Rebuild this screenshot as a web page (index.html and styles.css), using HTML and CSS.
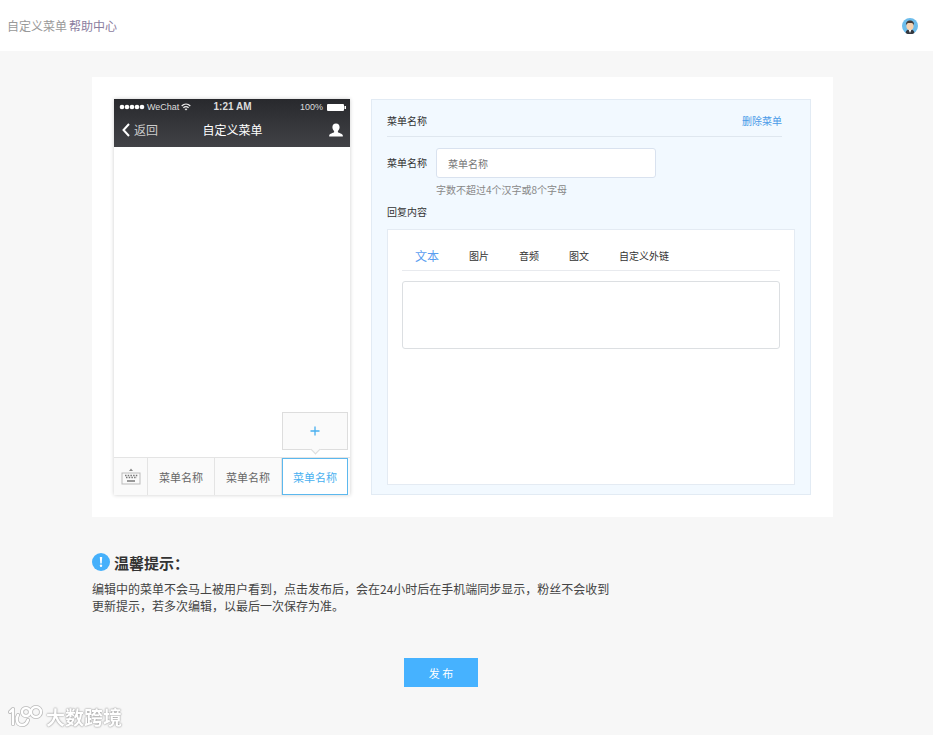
FILE: index.html
```html
<!DOCTYPE html>
<html lang="zh-CN">
<head>
    <meta charset="UTF-8">
    <meta name="viewport" content="width=device-width, initial-scale=1">
    <title>自定义菜单</title>
    <link rel="stylesheet" href="styles.css">
</head>
<body>
    <header class="topbar">
        <nav class="topbar-nav">
            <span>自定义菜单</span>
            <a href="#">帮助中心</a>
        </nav>
        <svg class="avatar" viewBox="0 0 16 16" aria-hidden="true">
            <circle cx="8" cy="8" r="8" fill="#6dbdec"/>
            <path d="M3.600 15c.3-2.600 1.800-3.800 4.400-3.800s4.100 1.200 4.400 3.800A8 8 0 0 1 3.600 15z" fill="#34383f"/>
            <path d="M6.300 11l1.700 4 1.700-4z" fill="#fff"/>
            <ellipse cx="8" cy="8" rx="3.600" ry="4" fill="#f6d2b0"/>
            <path d="M4 7.500C3.600 4 5.500 2.500 8 2.500s4.500 1.500 4 5c-.6-1.800-1.400-2.400-4-2.400S4.600 5.700 4 7.500z" fill="#423a38"/>
        </svg>
    </header>

    <main class="content">
        <div class="editor">
            <section class="phone">
                <div class="phone-head">
                    <div class="status">
                        <div class="status-left">
                            <svg width="26" height="6" viewBox="0 0 26 6" fill="#fff" aria-hidden="true">
                                <circle cx="3" cy="3" r="2.300"/><circle cx="8" cy="3" r="2.300"/><circle cx="13" cy="3" r="2.300"/><circle cx="18" cy="3" r="2.300"/><circle cx="23" cy="3" r="2.300"/>
                            </svg>
                            <span>WeChat</span>
                            <svg width="10" height="8" viewBox="0 0 10 8" fill="none" stroke="#eee" stroke-width="1.300" aria-hidden="true">
                                <path d="M.7 3C3.200.6 6.800.6 9.300 3M2.400 4.800c1.500-1.400 3.700-1.400 5.200 0"/>
                                <path d="M5 7.500L3.500 6q1.500-1 3 0z" fill="#eee" stroke="none"/>
                            </svg>
                        </div>
                        <span class="status-time">1:21 AM</span>
                        <div class="status-right">
                            <span>100%</span>
                            <svg width="19" height="7" viewBox="0 0 19 7" fill="#fff" aria-hidden="true">
                                <rect y="0" width="17" height="7" rx="1"/><rect x="17.500" y="2" width="1.500" height="3"/>
                            </svg>
                        </div>
                    </div>
                    <div class="phone-nav">
                        <a class="back" href="#">
                            <svg width="8" height="14" viewBox="0 0 8 14" fill="none" stroke="#fff" stroke-width="2" aria-hidden="true"><path d="M7 1L1.500 7 7 13"/></svg>
                            返回
                        </a>
                        <span class="phone-title">自定义菜单</span>
                        <svg class="person" width="14" height="14" viewBox="0 0 14 14" fill="#fff" aria-hidden="true">
                            <path d="M7 .5c2.400 0 3.600 1.500 3.600 3.700 0 1.500-.7 2.900-1.700 3.700v1.300c.8.8 4.600 1.200 4.900 3v1.300H.2v-1.300c.3-1.800 4.100-2.200 4.900-3V7.900C4.100 7.100 3.400 5.700 3.400 4.200 3.400 2 4.600.5 7 .5z"/>
                        </svg>
                    </div>
                </div>
                <div class="phone-screen"></div>
                <div class="phone-menu">
                    <button class="menu-key" type="button" aria-label="键盘">
                        <svg width="20" height="17" viewBox="0 0 20 17" fill="none" stroke="#bbb" aria-hidden="true">
                            <path d="M8 3l2-2.500L12 3z" fill="#888" stroke="none"/>
                            <rect x="1" y="5" width="18" height="11" stroke-width="1"/>
                            <path d="M4 7.500h13M5 9.500h11" stroke="#777" stroke-width="1.500" stroke-dasharray="1.500 1.200"/>
                            <path d="M6 13h8" stroke="#777" stroke-width="1.500"/>
                        </svg>
                    </button>
                    <button class="menu-item" type="button">菜单名称</button>
                    <button class="menu-item" type="button">菜单名称</button>
                    <div class="menu-slot">
                        <button class="menu-add" type="button" aria-label="添加子菜单">
                            <svg width="10" height="10" viewBox="0 0 10 10" stroke="#48b0f0" aria-hidden="true"><path d="M5 .5v9M.5 5h9" stroke-width="1.300"/></svg>
                        </button>
                        <button class="menu-item menu-item--active" type="button">菜单名称</button>
                    </div>
                </div>
            </section>

            <form class="panel">
                <div class="panel-head">
                    <span>菜单名称</span>
                    <a href="#">删除菜单</a>
                </div>
                <div class="row">
                    <label for="menu_name">菜单名称</label>
                    <div class="field">
                        <input id="menu_name" type="text" name="menu_name" placeholder="菜单名称">
                        <p class="hint">字数不超过4个汉字或8个字母</p>
                    </div>
                </div>
                <label class="reply-label" for="reply">回复内容</label>
                <div class="reply">
                    <div class="tabs">
                        <button class="tab tab--active" type="button">文本</button>
                        <button class="tab" type="button">图片</button>
                        <button class="tab" type="button">音频</button>
                        <button class="tab" type="button">图文</button>
                        <button class="tab" type="button">自定义外链</button>
                    </div>
                    <textarea id="reply" name="reply"></textarea>
                </div>
            </form>
        </div>

        <section class="tips">
            <h2>
                <svg width="18" height="18" viewBox="0 0 18 18" aria-hidden="true">
                    <circle cx="9" cy="9" r="9" fill="#45b0fb"/>
                    <path d="M7.800 4h2.400l-.5 6.500H8.300z" fill="#fff"/><circle cx="9" cy="12.700" r="1.200" fill="#fff"/>
                </svg>
                温馨提示：
            </h2>
            <p>编辑中的菜单不会马上被用户看到，点击发布后，会在24小时后在手机端同步显示，粉丝不会收到更新提示，若多次编辑，以最后一次保存为准。</p>
        </section>

        <div class="actions">
            <button class="publish" type="button">发 布</button>
        </div>
    </main>

    <div class="watermark">
        <svg width="36" height="24" viewBox="0 0 36 24" fill="none" stroke-linecap="round" stroke-linejoin="round" aria-hidden="true">
            <g stroke="#bbb" stroke-width="4">
                <path d="M2 7l3-3v15M10 10c-2 3-2 10 4 10 3 0 5-2 6-5"/>
                <circle cx="18" cy="7" r="4"/><circle cx="28" cy="7" r="5"/>
            </g>
            <g stroke="#fff" stroke-width="2.400">
                <path d="M2 7l3-3v15M10 10c-2 3-2 10 4 10 3 0 5-2 6-5"/>
                <circle cx="18" cy="7" r="4"/><circle cx="28" cy="7" r="5"/>
            </g>
        </svg>
        <span>大数跨境</span>
    </div>
</body>
</html>
```
FILE: styles.css
```css
* {
    box-sizing: border-box;
}

body {
    margin: 0;
    background: #f7f7f7;
    color: #333;
    font-family: "Noto Sans CJK SC", sans-serif;
    font-size: 10px;
    line-height: 16px;
}

button,
input,
textarea {
    font: inherit;
    color: inherit;
}

button {
    padding: 0;
    border: none;
    background: none;
}

a {
    text-decoration: none;
}

svg {
    display: block;
    flex: none;
}

.topbar {
    display: flex;
    align-items: center;
    justify-content: space-between;
    height: 51px;
    padding: 0 15px 0 7px;
    background: #fff;
    font-size: 12px;
    color: #999;
}

.topbar-nav {
    display: flex;
    gap: 2px;
}

.topbar a {
    color: #8a7d9e;
}

.avatar {
    width: 16px;
    height: 16px;
}

.content {
    padding: 26px 100px 0 92px;
}

.editor {
    display: flex;
    gap: 21px;
    padding: 22px;
    background: #fff;
}

/* Phone preview */
.phone {
    display: flex;
    flex-direction: column;
    flex: none;
    width: 236px;
    background: #fff;
    box-shadow: 0 0 4px rgba(0, 0, 0, 0.2);
}

.phone-head {
    height: 48px;
    background: linear-gradient(#28292d, #414246);
    color: #fff;
}

.status,
.phone-nav {
    display: grid;
    grid-template-columns: 1fr auto 1fr;
    align-items: center;
}

.status {
    height: 16px;
    padding: 0 4px 0 5px;
    font-family: "Liberation Sans", Arial, sans-serif;
    font-size: 9px;
    color: #ddd;
}

.status-left,
.status-right {
    display: flex;
    align-items: center;
    gap: 2px;
}

.status-right {
    justify-content: flex-end;
    gap: 4px;
}

.status-time {
    font-size: 10px;
    font-weight: bold;
}

.phone-nav {
    height: 30px;
    padding: 0 7px 0 8px;
    font-size: 12px;
}

.back {
    display: flex;
    align-items: center;
    gap: 4px;
    color: #ccc;
}

.person {
    justify-self: end;
}

.phone-screen {
    flex: 1;
}

.phone-menu {
    display: flex;
    height: 38px;
    padding-right: 2px;
    border-top: 1px solid #e4e4e4;
    background: #fafafa;
    font-size: 11px;
    color: #666;
}

.menu-key {
    display: flex;
    align-items: center;
    justify-content: center;
    width: 34px;
    border-right: 1px solid #e4e4e4;
}

.menu-item,
.menu-slot {
    flex: 1;
}

.menu-item {
    border-right: 1px solid #e4e4e4;
}

.menu-slot {
    display: flex;
    position: relative;
}

.menu-item--active {
    border: 1px solid #5cb8ee;
    background: #fff;
    color: #48b0f0;
}

/* Sub menu bubble over the active item */
.menu-add {
    display: flex;
    align-items: center;
    justify-content: center;
    position: absolute;
    bottom: 45px;
    left: 0;
    width: 100%;
    height: 38px;
    border: 1px solid #ddd;
    background: #fafafa;
}

.menu-add::after {
    content: "";
    position: absolute;
    bottom: -4px;
    left: calc(50% - 3px);
    width: 6px;
    height: 6px;
    border: solid #ddd;
    border-width: 0 1px 1px 0;
    background: #fafafa;
    transform: rotate(45deg);
}

/* Settings panel */
.panel {
    flex: 1;
    padding: 6px 15px 9px;
    border: 1px solid #e2ebf4;
    background: #f2f9ff;
}

.panel-head {
    display: flex;
    align-items: center;
    justify-content: space-between;
    height: 31px;
    margin-right: 13px;
    border-bottom: 1px solid #dfe7ef;
}

.panel-head a {
    color: #4a9be8;
}

.row {
    display: flex;
    gap: 9px;
    margin-top: 11px;
}

.row label {
    line-height: 30px;
}

.field input {
    display: block;
    width: 220px;
    height: 30px;
    padding: 0 11px;
    border: 1px solid #d9e2ef;
    border-radius: 3px;
    background: #fff;
}

.field input::placeholder {
    color: #777;
    opacity: 1;
}

.hint {
    margin: 4px 0 6px;
    color: #888;
}

.reply-label {
    display: block;
}

.reply {
    height: 256px;
    margin-top: 9px;
    padding: 11px 14px;
    border: 1px solid #e4ebf3;
    background: #fff;
}

.tabs {
    display: flex;
    gap: 30px;
    height: 30px;
    padding: 0 13px;
    border-bottom: 1px solid #e8eaee;
}

.tab--active {
    font-size: 12px;
    color: #5a9df0;
}

.reply textarea {
    display: block;
    width: 100%;
    height: 68px;
    margin-top: 10px;
    border: 1px solid #dcdfe2;
    border-radius: 3px;
    resize: none;
}

/* Tips */
.tips {
    max-width: 520px;
    margin-top: 36px;
    font-size: 12px;
    line-height: 17px;
}

.tips h2 {
    display: flex;
    align-items: center;
    gap: 4px;
    margin: 0;
    font-size: 15px;
    font-weight: bold;
}

.tips p {
    margin: 9px 0 0;
    color: #444;
}

.actions {
    display: flex;
    justify-content: center;
    margin-top: 44px;
    padding-right: 43px;
}

.publish {
    width: 74px;
    height: 29px;
    background: #46b2ff;
    color: #fff;
    font-size: 11px;
}

.watermark {
    display: flex;
    align-items: center;
    gap: 2px;
    position: fixed;
    bottom: 4px;
    left: 8px;
    color: #fff;
    font-size: 19px;
    font-weight: bold;
    line-height: 28px;
    text-shadow: 0 0 2px #888, 0 0 1px #aaa;
}
```
